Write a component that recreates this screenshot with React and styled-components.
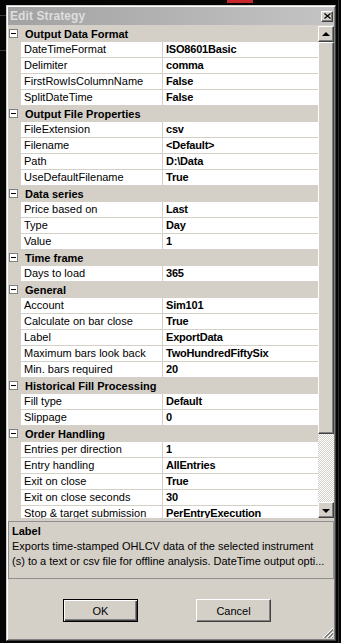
import React from 'react';
import styled, { createGlobalStyle } from 'styled-components';

const face = '#d4d0c8';

const GlobalStyle = createGlobalStyle`
  html, body { margin: 0; padding: 0; }
  body {
    width: 341px;
    height: 643px;
    overflow: hidden;
    background: #050505;
    font-family: "Liberation Sans", Arial, sans-serif;
    font-size: 11px;
    color: #000;
  }
`;

const Screen = styled.div`
  height: 643px;
  box-sizing: border-box;
  padding: 5px 0 0 6px;
  background:
    linear-gradient(#c8262a, #c8262a) 227px 0 / 26px 3px no-repeat,
    linear-gradient(#3a3a3a, #3a3a3a) 0 15px / 6px 1px no-repeat,
    linear-gradient(#3a3a3a, #3a3a3a) 0 50px / 6px 1px no-repeat,
    linear-gradient(#2e2e2e, #2e2e2e) 338px 0 / 1px 643px no-repeat,
    #050505;
`;

const Window = styled.div`
  width: 330px;
  height: 636px;
  box-sizing: border-box;
  background: ${face};
  border: 1px solid;
  border-color: ${face} #404040 #404040 ${face};
  box-shadow: inset 1px 1px #fff, inset -1px -1px #808080;
  padding: 1px;
  display: flex;
  flex-direction: column;
`;

const TitleBar = styled.div`
  height: 18px;
  display: flex;
  align-items: center;
  justify-content: space-between;
  padding: 0 1px 0 2px;
  background: linear-gradient(to right, #a2a2a2, #c4c4c4);
`;

const Title = styled.span`
  font-size: 12px;
  font-weight: bold;
  color: #dedede;
  letter-spacing: 0.1px;
`;

const raised = `
  background: ${face};
  border: 1px solid;
  border-color: #fff #404040 #404040 #fff;
  box-shadow: inset -1px -1px #808080;
  box-sizing: border-box;
`;

const CloseButton = styled.div`
  ${raised}
  width: 12px;
  height: 11px;
  display: flex;
  align-items: center;
  justify-content: center;
`;

const Grid = styled.div`
  margin-top: 1px;
  height: 492px;
  display: flex;
  overflow: hidden;
`;

const Rows = styled.div`
  width: 310px;
  overflow: hidden;
  background: ${face};
`;

const CategoryRow = styled.div`
  height: 16px;
  display: flex;
  align-items: center;
  padding-left: 1px;
  gap: 7px;
  font-weight: bold;
  line-height: 16px;
  white-space: nowrap;
`;

const Toggle = styled.div`
  width: 9px;
  height: 9px;
  box-sizing: border-box;
  border: 1px solid #808080;
  background: #fff;
  display: flex;
  align-items: center;
  justify-content: center;
  margin-top: -1px;
  &::after {
    content: '';
    width: 5px;
    height: 1px;
    background: #000;
  }
`;

const PropRow = styled.div`
  height: 16px;
  display: flex;
  padding-left: 13px;
`;

const Cell = styled.div`
  height: 16px;
  box-sizing: border-box;
  background: #fff;
  border-bottom: 1px solid ${face};
  line-height: 15px;
  padding-left: 3px;
  white-space: nowrap;
  overflow: hidden;
`;

const NameCell = styled(Cell)`
  width: 142px;
  border-right: 1px solid ${face};
`;

const ValueCell = styled(Cell)`
  flex: 1;
  font-weight: bold;
  letter-spacing: -0.2px;
`;

const ScrollBar = styled.div`
  width: 16px;
  display: flex;
  flex-direction: column;
`;

const ScrollButton = styled.div`
  ${raised}
  width: 16px;
  height: 16px;
  display: flex;
  align-items: center;
  justify-content: center;
  &::after {
    content: '';
    border-left: 4px solid transparent;
    border-right: 4px solid transparent;
    ${(p) => (p.$down ? 'border-top: 4px solid #000;' : 'border-bottom: 4px solid #000;')}
    margin-${(p) => (p.$down ? 'top' : 'bottom')}: 1px;
  }
`;

const Thumb = styled.div`
  ${raised}
  width: 16px;
  height: 392px;
`;

const Track = styled.div`
  flex: 1;
  background: repeating-conic-gradient(${face} 0 25%, #fff 0 50%) 0 0 / 2px 2px;
`;

const Description = styled.div`
  margin-top: 3px;
  height: 58px;
  box-sizing: border-box;
  border: 1px solid #8f8f8f;
  padding: 2px 3px 0;
  line-height: 15px;
`;

const DescTitle = styled.div`
  font-weight: bold;
`;

const DescLine = styled.div`
  white-space: nowrap;
  overflow: hidden;
`;

const Footer = styled.div`
  flex: 1;
  display: flex;
  flex-direction: column;
`;

const ButtonRow = styled.div`
  display: flex;
  gap: 58px;
  padding: 20px 0 0 55px;
`;

const Button = styled.div`
  width: 75px;
  height: 23px;
  box-sizing: border-box;
  background: ${face};
  border: 1px solid;
  border-color: ${(p) => (p.$default ? '#000' : '#fff #404040 #404040 #fff')};
  box-shadow: ${(p) =>
    p.$default
      ? 'inset 1px 1px #fff, inset -1px -1px #404040, inset -2px -2px #808080'
      : 'inset -1px -1px #808080'};
  display: flex;
  align-items: center;
  justify-content: center;
  font-size: 11px;
`;

const GripRow = styled.div`
  margin-top: auto;
  display: flex;
  justify-content: flex-end;
`;

const Grip = () => (
  <svg width="12" height="12" viewBox="0 0 12 12">
    {[0, 4, 8].map((o) => (
      <g key={o}>
        <line x1={11} y1={1 + o} x2={1 + o} y2={11} stroke="#fff" strokeWidth="1" />
        <line x1={11} y1={2 + o} x2={2 + o} y2={11} stroke="#808080" strokeWidth="1" />
        <line x1={11} y1={3 + o} x2={3 + o} y2={11} stroke="#808080" strokeWidth="1" />
      </g>
    ))}
  </svg>
);

const sections = [
  ['Output Data Format', [
    ['DateTimeFormat', 'ISO8601Basic'],
    ['Delimiter', 'comma'],
    ['FirstRowIsColumnName', 'False'],
    ['SplitDateTime', 'False'],
  ]],
  ['Output File Properties', [
    ['FileExtension', 'csv'],
    ['Filename', '<Default>'],
    ['Path', 'D:\\Data'],
    ['UseDefaultFilename', 'True'],
  ]],
  ['Data series', [
    ['Price based on', 'Last'],
    ['Type', 'Day'],
    ['Value', '1'],
  ]],
  ['Time frame', [
    ['Days to load', '365'],
  ]],
  ['General', [
    ['Account', 'Sim101'],
    ['Calculate on bar close', 'True'],
    ['Label', 'ExportData'],
    ['Maximum bars look back', 'TwoHundredFiftySix'],
    ['Min. bars required', '20'],
  ]],
  ['Historical Fill Processing', [
    ['Fill type', 'Default'],
    ['Slippage', '0'],
  ]],
  ['Order Handling', [
    ['Entries per direction', '1'],
    ['Entry handling', 'AllEntries'],
    ['Exit on close', 'True'],
    ['Exit on close seconds', '30'],
    ['Stop & target submission', 'PerEntryExecution'],
  ]],
];

export default function App() {
  return (
    <Screen>
      <GlobalStyle />
      <Window>
        <TitleBar>
          <Title>Edit Strategy</Title>
          <CloseButton>
            <svg width="7" height="6" viewBox="0 0 7 6">
              <path d="M0.5 0.5 L6.5 5.5 M6.5 0.5 L0.5 5.5" stroke="#000" strokeWidth="1.2" />
            </svg>
          </CloseButton>
        </TitleBar>
        <Grid>
          <Rows>
            {sections.map(([cat, props]) => (
              <React.Fragment key={cat}>
                <CategoryRow>
                  <Toggle />
                  {cat}
                </CategoryRow>
                {props.map(([name, value]) => (
                  <PropRow key={name}>
                    <NameCell>{name}</NameCell>
                    <ValueCell>{value}</ValueCell>
                  </PropRow>
                ))}
              </React.Fragment>
            ))}
          </Rows>
          <ScrollBar>
            <ScrollButton />
            <Thumb />
            <Track />
            <ScrollButton $down />
          </ScrollBar>
        </Grid>
        <Description>
          <DescTitle>Label</DescTitle>
          <DescLine>Exports time-stamped OHLCV data of the selected instrument</DescLine>
          <DescLine>(s) to a text or csv file for offline analysis. DateTime output opti...</DescLine>
        </Description>
        <Footer>
          <ButtonRow>
            <Button $default>OK</Button>
            <Button>Cancel</Button>
          </ButtonRow>
          <GripRow>
            <Grip />
          </GripRow>
        </Footer>
      </Window>
    </Screen>
  );
}
